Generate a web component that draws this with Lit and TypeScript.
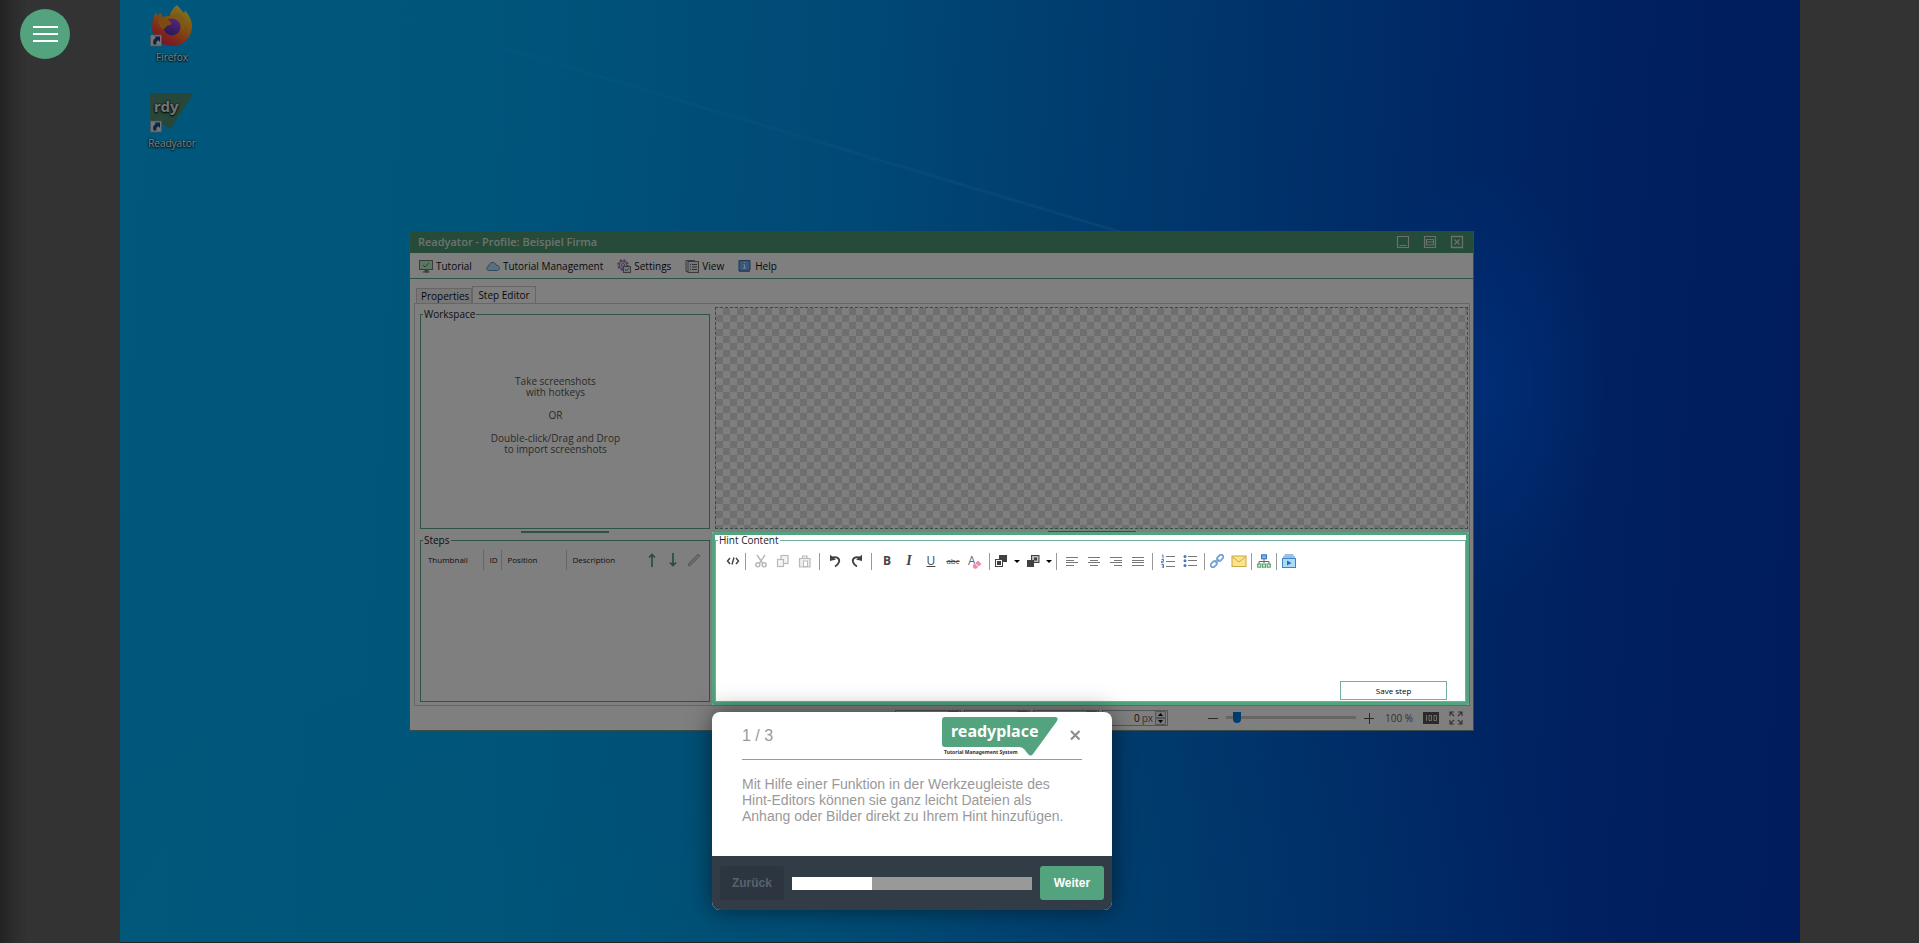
import { LitElement, html, svg, css, nothing } from "lit";
import { customElement, state } from "lit/decorators.js";

const icon = (w: number, h: number, body: unknown) =>
  html`<svg width=${w} height=${h} viewBox="0 0 ${w} ${h}" fill="none" aria-hidden="true">${body}</svg>`;

const lines = (rows: number[][], color = "#777") =>
  rows.map(([x1, x2, y]) => svg`<path d="M${x1} ${y}H${x2}" stroke=${color} />`);

const shortcutArrow = svg`<rect x=".5" y="33" width="11" height="11" fill="#e8e8e8" stroke="#999" stroke-width=".6"/><path d="M3.500 42.500c-1-4 .5-6 2.500-6.500L4.500 34.500H10V40L8.300 38.300C6.500 39 6 40.500 6.500 42.500z" fill="#16468c"/>`;

const firefox = icon(44, 46, svg`
  <defs>
    <linearGradient id="ff" x1=".8" y1="0" x2=".2" y2="1"><stop offset="0" stop-color="#fff04a"/><stop offset=".45" stop-color="#ff9a25"/><stop offset=".75" stop-color="#ff4838"/><stop offset="1" stop-color="#e0236c"/></linearGradient>
    <linearGradient id="fp" x1=".7" y1="0" x2=".3" y2="1"><stop offset="0" stop-color="#a84dff"/><stop offset="1" stop-color="#4f32a8"/></linearGradient>
  </defs>
  <path d="M27 3c3 3 5 6 7 8 1-1 1-2 1-3 4 5 7 10 7 16 0 11-8 20-20 20S2 35 2 24c0-6 2-10 4-14l2 4c1-2 2-3 3-3l1 4c3-1 5-1 8-1 0-4 3-8 7-11z" fill="url(#ff)"/>
  <circle cx="22" cy="25" r="8.500" fill="url(#fp)"/>
  <path d="M8 18c4-2 8-2 12 1l2 3-5 2-3 3c-3 1-5-4-6-9z" fill="#ff9425"/>
  <path d="M25 15c7 1 9 9 6 15 5-5 5-15-2-18-3-1-5 1-4 3z" fill="#ffb52c"/>
  ${shortcutArrow}`);

const readyator = icon(44, 46, svg`
  <path d="M2 5H41q3 0 1 3L21 40q-2 2-4 0L12 35H2q-2 0-2-2V7q0-2 2-2z" fill="#4c8f72"/>
  <text x="4" y="24" font-family="Noto Sans, sans-serif" font-weight="700" font-size="15" fill="#e6e6e6">rdy</text>
  ${shortcutArrow}`);

const menuIcons = {
  tutorial: icon(14, 14, svg`<rect x=".5" y="1.500" width="13" height="9" fill="#b8ecc6" stroke="#6b7d76"/><path d="M4 6l2 2 4-4" stroke="#2f9a55"/><path d="M6 11h3v2H6zM3.500 13h7" stroke="#777" fill="#999"/>`),
  cloud: icon(14, 14, svg`<path d="M3 11.500C-.5 11 .4 7.500 2.700 7.300 3 3 8.800 2 10.300 6.200c3.500 0 4.200 4.700 1 5.300z" fill="#b5e0fb" stroke="#5b92bd"/>`),
  gear: icon(14, 14, svg`<circle cx="6" cy="6" r="5" stroke="#8e76ac" stroke-width="1.600" stroke-dasharray="2.200 1.700"/><circle cx="6" cy="6" r="4" fill="#ddd2ea" stroke="#8e76ac"/><circle cx="6" cy="6" r="1.500" fill="#fff" stroke="#8e76ac"/><rect x="6.500" y="7.500" width="7" height="6" fill="#eee" stroke="#777"/><path d="M8 10l1.500 2L12 9" stroke="#4d7fb0"/>`),
  view: icon(14, 14, svg`<path d="M3.500 1v11.500H1V1.500h9" stroke="#777"/><rect x="3" y="2.500" width="10.500" height="11" fill="#eee" stroke="#777"/><path d="M5 5.500h1M7 5.500h5M5 8h1M7 8h5M5 10.500h1M7 10.500h5" stroke="#666"/>`),
  help: icon(14, 14, svg`<path d="M1 1.500h11v9.500H10V12H1z" fill="#6fb0f5" stroke="#3d6fae"/><path d="M1 12.500h11" stroke="#888"/><path d="M6.500 3v1M5.500 5.500h1V9M5 9h3" stroke="#fff"/>`),
};

const I = "#404040";
const D = "#b9b9b9";
const toolIcons: Record<string, unknown> = {
  code: icon(14, 14, svg`<path d="M4 4L1.500 7 4 10M10 4l2.500 3L10 10M8 3.500L6 10.500" stroke=${I} stroke-width="1.400"/>`),
  cut: icon(14, 14, svg`<path d="M3 1l5.500 8M11 1L5.500 9" stroke=${D} stroke-width="1.500"/><circle cx="3.800" cy="10.800" r="2" stroke=${D} stroke-width="1.500"/><circle cx="10.200" cy="10.800" r="2" stroke=${D} stroke-width="1.500"/>`),
  copy: icon(14, 14, svg`<rect x="5" y="1.500" width="7" height="8" fill="#f4f4f4" stroke=${D} stroke-width="1.200"/><rect x="1.500" y="5.500" width="6" height="7" fill="#f4f4f4" stroke=${D} stroke-width="1.200"/>`),
  paste: icon(14, 14, svg`<path d="M1.500 13V4.500H12V13zM4.500 4V2H9v2" fill="#eee" stroke=${D} stroke-width="1.200"/><rect x="5.500" y="7" width="4" height="5.500" fill="#fff" stroke=${D}/>`),
  undo: icon(14, 14, svg`<path d="M2.500 4.500C8 1.500 12 4 11 8q-.8 2.500-4 4.500" stroke=${I} stroke-width="1.900"/><path d="M2 .8V7l6-1.500z" fill=${I}/>`),
  redo: icon(14, 14, svg`<path d="M11.500 4.500C6 1.500 2 4 3 8q.8 2.500 4 4.500" stroke=${I} stroke-width="1.900"/><path d="M12 .8V7L6 5.500z" fill=${I}/>`),
  bg: icon(14, 14, svg`<rect x="5" y="1" width="8" height="7" fill=${I}/><rect x="1.500" y="5.500" width="7" height="7" fill="#fff" stroke=${I}/><rect x="3" y="7" width="4" height="4" fill=${I}/>`),
  fg: icon(14, 14, svg`<rect x="5.500" y="1.500" width="7.500" height="7" fill="#bbb" stroke=${I}/><rect x="8" y="3.500" width="3" height="3" fill=${I}/><rect x="1" y="6" width="7" height="7" fill=${I}/>`),
  left: icon(14, 14, lines([[1, 13, 3.5], [1, 9, 6.5], [1, 13, 8.5], [1, 9, 11.5]])),
  center: icon(14, 14, lines([[1, 13, 3.5], [3, 11, 6.5], [1, 13, 8.5], [3, 11, 11.5]])),
  right: icon(14, 14, lines([[1, 13, 3.5], [5, 13, 6.5], [1, 13, 8.5], [5, 13, 11.5]])),
  justify: icon(14, 14, lines([[1, 13, 3.5], [1, 13, 6.5], [1, 13, 8.5], [1, 13, 11.5]])),
  ol: icon(14, 14, svg`${lines([[5, 14, 2.5], [5, 14, 7.5], [5, 14, 12.5]])}<path d="M1 1h1v3.500M.5 5.500h2v1.800h-2v1.500h2M.5 10.500h2V14h-2M1 12h1.500" stroke="#4a78b5"/>`),
  ul: icon(14, 14, svg`${lines([[5, 14, 2.5], [5, 14, 6.5], [5, 14, 11.5]])}<circle cx="2" cy="2.500" r="1.500" fill="#4a78b5"/><circle cx="2" cy="6.800" r="1.500" fill="#4a78b5"/><circle cx="2" cy="11.500" r="1.500" fill="#4a78b5"/>`),
  link: icon(14, 14, svg`<g transform="rotate(-45 7 7)" stroke="#6f9fdc" stroke-width="1.700"><rect x="-1" y="4.800" width="7" height="4.400" rx="2.200"/><rect x="8" y="4.800" width="7" height="4.400" rx="2.200"/><path d="M4.500 7h5"/></g>`),
  mail: icon(16, 14, svg`<rect x="1" y="2" width="14" height="10.500" fill="#ffe38a" stroke="#c9a646"/><path d="M1.500 3l6.500 5 6.500-5" stroke="#c9a646"/>`),
  tree: icon(14, 14, svg`<path d="M7 5v4M2 10V7.500h10V10" stroke="#666"/><rect x="4.500" y=".8" width="5" height="4" fill="#6db3f8" stroke="#3f73b5"/><rect x=".7" y="10" width="3.200" height="3.200" fill="#c6efce" stroke="#4f9c66"/><rect x="5.400" y="10" width="3.200" height="3.200" fill="#c6efce" stroke="#4f9c66"/><rect x="10.100" y="10" width="3.200" height="3.200" fill="#c6efce" stroke="#4f9c66"/>`),
  video: icon(16, 14, svg`<path d="M3.500 1h9M2 3h12" stroke="#3f7fc0" stroke-width="1.200"/><rect x="1.500" y="4.500" width="13" height="9" fill="#a9dcfb" stroke="#3f84c8"/><path d="M6 6.500l4.500 2.500L6 11.500z" fill="#2c6cae"/>`),
  bold: html`<b>B</b>`,
  italic: html`<i class="serif">I</i>`,
  underline: html`<u>U</u>`,
  strike: html`<s>abc</s>`,
  clear: icon(16, 18, svg`<text x="1" y="13" font-size="12" font-family="Open Sans, sans-serif" fill="#666">A</text><path d="M6 13l5-4.500 3.500 3.500-5 4.500q-2 1-3.500-1z" fill="#f38ba6"/><path d="M8 11.300l3.500 3.700" stroke="#fff"/>`),
};

interface Tool { id: string; label: string; menu?: boolean; off?: boolean }
const toolGroups: { tight?: boolean; tools: Tool[] }[] = [
  { tight: true, tools: [{ id: "code", label: "Source" }] },
  { tools: [{ id: "cut", label: "Cut", off: true }, { id: "copy", label: "Copy", off: true }, { id: "paste", label: "Paste", off: true }] },
  { tools: [{ id: "undo", label: "Undo" }, { id: "redo", label: "Redo" }] },
  { tools: [{ id: "bold", label: "Bold" }, { id: "italic", label: "Italic" }, { id: "underline", label: "Underline" }, { id: "strike", label: "Strikethrough" }, { id: "clear", label: "Clear format" }] },
  { tight: true, tools: [{ id: "bg", label: "Background colour", menu: true }, { id: "fg", label: "Text colour", menu: true }] },
  { tools: [{ id: "left", label: "Align left" }, { id: "center", label: "Align centre" }, { id: "right", label: "Align right" }, { id: "justify", label: "Justify" }] },
  { tools: [{ id: "ol", label: "Numbered list" }, { id: "ul", label: "Bullet list" }] },
  { tight: true, tools: [{ id: "link", label: "Link" }, { id: "mail", label: "E-mail" }] },
  { tight: true, tools: [{ id: "tree", label: "Reference" }] },
  { tight: true, tools: [{ id: "video", label: "Media" }] },
];

const reset = css`
  * { box-sizing: border-box; }
  button { border: 0; padding: 0; margin: 0; background: none; font: inherit; color: inherit; }
  svg { display: block; flex: none; }
`;

@customElement("hint-editor")
class HintEditor extends LitElement {
  static styles = [reset, css`
    :host { display: flex; flex-direction: column; height: 100%; background: #fff; color: #222; font: 10px/14px "Open Sans", "Noto Sans", sans-serif; }
    fieldset { display: flex; flex-direction: column; flex: 1; margin: 0; padding: 5px 18px 1px 0; border: 1px solid #70b09c; min-width: 0; }
    legend { margin-left: 2px; padding: 0 1px; line-height: 10px; }
    .toolbar { display: flex; align-items: center; height: 20px; padding: 2px 0 0 5px; }
    .group { display: flex; padding: 0 3px 0 4px; border-right: 1px solid #999; }
    .group.tight { padding: 0 1px; }
    .group:last-child { border: 0; }
    .tool { display: flex; align-items: center; justify-content: center; width: 22px; height: 17px; font-size: 12px; color: #444; }
    .tool.menu { width: 32px; gap: 6px; }
    .tool s { font-size: 8px; }
    .serif { font-family: "Liberation Serif", serif; font-size: 14px; font-weight: 700; }
    .caret { border: 3px solid transparent; border-top: 3px solid #000; border-bottom: 0; }
    .area { flex: 1; width: 100%; border: 0; outline: 0; resize: none; background: transparent; font: inherit; }
    .save { align-self: flex-end; width: 107px; height: 19px; border: 1px solid #70b09c; background: #fff; color: #000; font-size: 8px; }
  `];
  render() {
    return html`<fieldset>
      <legend>Hint Content</legend>
      <div class="toolbar">
        ${toolGroups.map((g) => html`<div class="group ${g.tight ? "tight" : ""}">
          ${g.tools.map((t) => html`<button class="tool ${t.menu ? "menu" : ""}" aria-label=${t.label} ?disabled=${t.off}>
            ${toolIcons[t.id]}${t.menu ? html`<span class="caret"></span>` : nothing}</button>`)}
        </div>`)}
      </div>
      <textarea class="area" aria-label="Hint Content"></textarea>
      <button class="save">Save step</button>
    </fieldset>`;
  }
}

@customElement("tour-card")
class TourCard extends LitElement {
  @state() step = 1;
  static styles = [reset, css`
    :host { display: block; border-radius: 8px; overflow: hidden; background: #fff; color: #999; box-shadow: 0 0 24px rgba(0, 0, 0, .5); font: 14px/16px "Liberation Sans", Arial, sans-serif; }
    .body { padding: 5px 30px 0; height: 144px; }
    .head { display: flex; align-items: flex-start; height: 43px; border-bottom: 1px solid #999; }
    .count { flex: 1; padding-top: 11px; font-size: 16px; }
    .close { width: 14px; height: 14px; margin: 11px 0 0 10px; }
    p { margin: 16px 0 0; }
    .foot { display: flex; align-items: center; gap: 8px; height: 54px; padding: 0 8px; background: #323c47; }
    .nav { width: 64px; height: 34px; border-radius: 3px; background: #52a37e; color: #fff; font-size: 12px; font-weight: 700; }
    .nav.back { background: #2d3640; color: #57626d; }
    .bar { flex: 1; height: 13px; background: #999; }
    .fill { height: 100%; background: #fff; }
  `];
  render() {
    return html`<div class="body">
        <div class="head">
          <span class="count">${this.step} / 3</span>
          ${icon(116, 39, svg`<path d="M3 0H113q4 0 2 4L91 37q-2 3-5 0L82 32q-2-2-5-2H3q-3 0-3-3V3q0-3 3-3z" fill="#52a37e"/>
            <text x="9" y="20" font-family="Noto Sans, sans-serif" font-weight="700" font-size="16" fill="#fff">readyplace</text>
            <text x="2" y="37" font-family="Noto Sans, sans-serif" font-weight="700" font-size="5" fill="#2b303a">Tutorial Management System</text>`)}
          <button class="close" aria-label="Schließen">${icon(14, 14, svg`<path d="M3 3l8.500 8.500M11.500 3L3 11.500" stroke="#8f8f8f" stroke-width="2.200"/>`)}</button>
        </div>
        <p>Mit Hilfe einer Funktion in der Werkzeugleiste des Hint-Editors können sie ganz leicht Dateien als Anhang oder Bilder direkt zu Ihrem Hint hinzufügen.</p>
      </div>
      <div class="foot">
        <button class="nav back" disabled>Zurück</button>
        <div class="bar"><div class="fill" style="width:${(this.step / 3) * 100}%"></div></div>
        <button class="nav">Weiter</button>
      </div>`;
  }
}

@customElement("app-root")
class AppRoot extends LitElement {
  static styles = [reset, css`
    :host { display: block; height: 100vh; overflow: hidden; background: #333; font: 10px/14px "Open Sans", "Noto Sans", sans-serif; }
    .page { display: grid; grid-template-columns: 120px 1fr 119px; height: 100%; }
    .rail { padding: 9px 20px; background: linear-gradient(90deg, #222 0, #2b2b2b 12px, #333 28px); }
    .burger { display: flex; flex-direction: column; align-items: center; justify-content: center; gap: 5px; width: 50px; height: 50px; border-radius: 50%; background: #52a37e; }
    .burger span { width: 25px; height: 2px; background: #fff; }
    .desktop { position: relative; overflow: hidden; border-bottom: 1px solid #222;
      background:
        radial-gradient(ellipse 130px 220px at 81% 41%, rgba(0, 100, 255, .65), rgba(0, 80, 230, 0)),
        radial-gradient(ellipse 900px 500px at 35% 105%, rgba(0, 180, 230, .3), rgba(0, 180, 230, 0)),
        linear-gradient(93deg, #00b0f8 0, #00aaf6 22%, #0092ec 43%, #006ed8 62%, #0052cc 76%, #0040c0 88%, #0038b8 100%); }
    .beam { position: absolute; inset: 0; width: 100%; height: 100%; }
    .shortcuts { position: absolute; left: 14px; top: 0; display: flex; flex-direction: column; gap: 22px; width: 76px; }
    .shortcut { display: flex; flex-direction: column; align-items: center; gap: 2px; height: 64px; padding-top: 2px; color: #fff; text-decoration: none; text-shadow: 0 1px 2px #000, 0 0 2px #000; }
    .window { position: absolute; left: 17.2%; top: 231px; width: 63.4%; border: 1px solid #70988a; border-top: 0; background: #fff; color: #222; }
    .title { display: flex; align-items: center; height: 22px; padding: 0 9px 0 8px; background: #4c9672; color: #d8e6de; font-size: 11px; font-weight: 600; }
    .title h1 { flex: 1; margin: 0; font: inherit; }
    .controls { display: flex; gap: 13px; }
    .menu { display: flex; align-items: center; gap: 14px; height: 26px; padding: 0 9px; border-bottom: 1px solid #5ea48e; }
    .menu button { display: flex; align-items: center; gap: 3px; color: #111; }
    .tabs { display: flex; align-items: flex-end; height: 24px; padding-left: 6px; }
    .tab { height: 15px; padding: 0 2px 0 4px; border: 1px solid #ccc; border-bottom: 0; background: #f0f0f0; color: #111; }
    .tab.on { height: 17px; padding: 0 5px; background: #fff; }
    .panel { display: grid; grid-template-columns: 290fr 753fr; column-gap: 5px; margin: 0 3px 0 4px; padding: 3px 1px 1px 5px; border: 1px solid #ccc; }
    .col { display: flex; flex-direction: column; min-width: 0; }
    .frame { margin: 0; padding: 0; border: 1px solid #5ea48e; min-width: 0; }
    .frame legend { margin-left: 2px; padding: 0 1px; }
    .drop { display: flex; flex-direction: column; align-items: center; justify-content: center; height: 207px; padding: 0 19px 18px 0; color: #555; text-align: center; line-height: 11px; }
    .drop p { margin: 0 0 12px; }
    .grip { width: 88px; height: 2px; margin: 2px auto 0; background: #5ea48e; }
    .steps { height: 169px; }
    .steps-row { display: flex; align-items: center; padding: 3px 8px 0 6px; }
    .tablehead { flex: 1; border-collapse: collapse; table-layout: fixed; font-size: 8px; line-height: 20px; }
    .tablehead th { padding: 0 0 0 5px; border-right: 1px solid #ccc; font-weight: 400; text-align: left; }
    .tablehead th:first-child { padding-left: 1px; }
    .tablehead th:last-child { border: 0; }
    .c1 { width: 57px; } .c2 { width: 18px; } .c3 { width: 65px; }
    .tools { display: flex; gap: 7px; }
    .checker { height: 222px; border: 1px dashed #5ea48e; background: repeating-conic-gradient(#dedede 0 25%, #fff 0 50%) 0 0 / 14px 14px; }
    .grip.cover { height: 1px; }
    .spot { position: relative; z-index: 1; height: 173px; margin: 0 -1px -1px -3px; border: 3px solid #52a37e; border-radius: 2px; box-shadow: 0 0 0 4000px rgba(0, 0, 0, .5); }
    .card { position: absolute; left: -3px; top: calc(100% + 10px); width: 400px; }
    .status { display: flex; align-items: center; justify-content: flex-end; gap: 10px; height: 24px; padding: 0 10px 1px; color: #666; }
    .spins { display: flex; gap: 3px; margin-right: 29px; }
    .spin { display: flex; align-items: center; gap: 2px; width: 66px; height: 16px; padding-right: 1px; border: 1px solid #aaa; }
    .spin input { flex: 1; min-width: 0; border: 0; padding: 0; background: none; font: inherit; color: #222; text-align: right; appearance: textfield; }
    .spin input::-webkit-inner-spin-button { display: none; }
    .zoomer { display: flex; align-items: center; gap: 7px; }
    .zoom { appearance: none; width: 130px; height: 14px; margin: 0; background: linear-gradient(#ccc, #ccc) center / 100% 3px no-repeat; }
    .zoom::-webkit-slider-thumb { appearance: none; width: 8px; height: 11px; border-radius: 0 0 4px 4px; background: #0078d7; }
  `];

  menu: [keyof typeof menuIcons, string][] = [["tutorial", "Tutorial"], ["cloud", "Tutorial Management"], ["gear", "Settings"], ["view", "View"], ["help", "Help"]];
  spins: [string, string, string][] = [["X", "", ""], ["Y", "", ""], ["Width", "", ""], ["Height", "0", "px"]];

  render() {
    return html`<div class="page">
      <nav class="rail"><button class="burger" aria-label="Menü"><span></span><span></span><span></span></button></nav>
      <main class="desktop">
        <svg class="beam" viewBox="0 0 1680 943" preserveAspectRatio="none" aria-hidden="true">
          <defs><linearGradient id="b" x1="0" y1="0" x2="1" y2="0"><stop offset="0" stop-color="#4cf" stop-opacity="0"/><stop offset="1" stop-color="#4af" stop-opacity=".3"/></linearGradient></defs>
          <path d="M200 -7L1090 259" stroke="url(#b)" stroke-width="3"/>
        </svg>
        <div class="shortcuts">
          <a class="shortcut" href="#firefox">${firefox}<span>Firefox</span></a>
          <a class="shortcut" href="#readyator">${readyator}<span>Readyator</span></a>
        </div>
        <section class="window">
          <header class="title">
            <h1>Readyator - Profile: Beispiel Firma</h1>
            <div class="controls">
              <button aria-label="Minimize">${icon(14, 14, svg`<path d="M1.500 1.500h11v11h-11zM3.500 10.500h7" stroke="#d0e2d8" stroke-width="1.200"/>`)}</button>
              <button aria-label="Maximize">${icon(14, 14, svg`<path d="M1.500 1.500h11v11h-11zM3.500 4.500h7v5.500h-7zM4 7h6" stroke="#d0e2d8" stroke-width="1.200"/>`)}</button>
              <button aria-label="Close">${icon(14, 14, svg`<path d="M1.500 1.500h11v11h-11zM4.500 4.500l5 5M9.500 4.500l-5 5" stroke="#d0e2d8" stroke-width="1.300"/>`)}</button>
            </div>
          </header>
          <nav class="menu">${this.menu.map(([k, t]) => html`<button>${menuIcons[k]}${t}</button>`)}</nav>
          <div class="tabs" role="tablist">
            <button class="tab" role="tab" aria-selected="false">Properties</button>
            <button class="tab on" role="tab" aria-selected="true">Step Editor</button>
          </div>
          <div class="panel">
            <div class="col">
              <fieldset class="frame"><legend>Workspace</legend>
                <div class="drop"><p>Take screenshots<br>with hotkeys</p><p>OR</p><div>Double-click/Drag and Drop<br>to import screenshots</div></div>
              </fieldset>
              <div class="grip"></div>
              <fieldset class="frame steps"><legend>Steps</legend>
                <div class="steps-row">
                  <table class="tablehead">
                    <colgroup><col class="c1"><col class="c2"><col class="c3"><col></colgroup>
                    <thead><tr><th>Thumbnail</th><th>ID</th><th>Position</th><th>Description</th></tr></thead>
                  </table>
                  <div class="tools">
                    <button aria-label="Move up">${icon(14, 14, svg`<path d="M7 14V2M4 4.500l3-3 3 3" stroke="#4c9672" stroke-width="1.600"/>`)}</button>
                    <button aria-label="Move down">${icon(14, 14, svg`<path d="M7 0v12M4 9.500l3 3 3-3" stroke="#4c9672" stroke-width="1.600"/>`)}</button>
                    <button aria-label="Edit">${icon(14, 14, svg`<path d="M1 13l1-3 9-9 2 2-9 9z" fill="#d4d4d4" stroke="#aaa" stroke-width=".8"/>`)}</button>
                  </div>
                </div>
              </fieldset>
            </div>
            <div class="col">
              <div class="checker"></div>
              <div class="grip cover"></div>
              <div class="spot">
                <hint-editor></hint-editor>
                <tour-card class="card"></tour-card>
              </div>
            </div>
          </div>
          <footer class="status">
            <div class="spins">${this.spins.map(([n, v, unit]) => html`<label class="spin"><input type="number" .value=${v} aria-label=${n}>${unit} ${icon(11, 14, svg`<path d="M.5.5h10v6H.5zM.5 7.500h10v6H.5z" fill="#eee" stroke="#aaa"/><path d="M3 5l2.500-3L8 5zM3 9l2.500 3L8 9z" fill="#000"/>`)}</label>`)}</div>
            <div class="zoomer">
              <button aria-label="Zoom out">${icon(12, 12, svg`<path d="M1 6.500h10" stroke="#555"/>`)}</button>
              <input class="zoom" type="range" min="0" max="100" value="6" aria-label="Zoom">
              <button aria-label="Zoom in">${icon(12, 12, svg`<path d="M1 6.500h10M6.500 1v11" stroke="#555"/>`)}</button>
            </div>
            <output>100 %</output>
            <button aria-label="Original size">${icon(16, 12, svg`<rect width="16" height="12" fill="#555"/><path d="M3.500 3v6M6 3.500h2.500v5H6zM11 3.500h2.500v5H11z" stroke="#ddd"/>`)}</button>
            <button aria-label="Fit to window">${icon(14, 14, svg`<path d="M1 5V1h4M1 1l4 4M9 1h4v4M13 1L9 5M1 9v4h4M1 13l4-4M13 9v4H9M13 13L9 9" stroke="#666" stroke-width="1.100"/>`)}</button>
          </footer>
        </section>
      </main>
      <div></div>
    </div>`;
  }
}
